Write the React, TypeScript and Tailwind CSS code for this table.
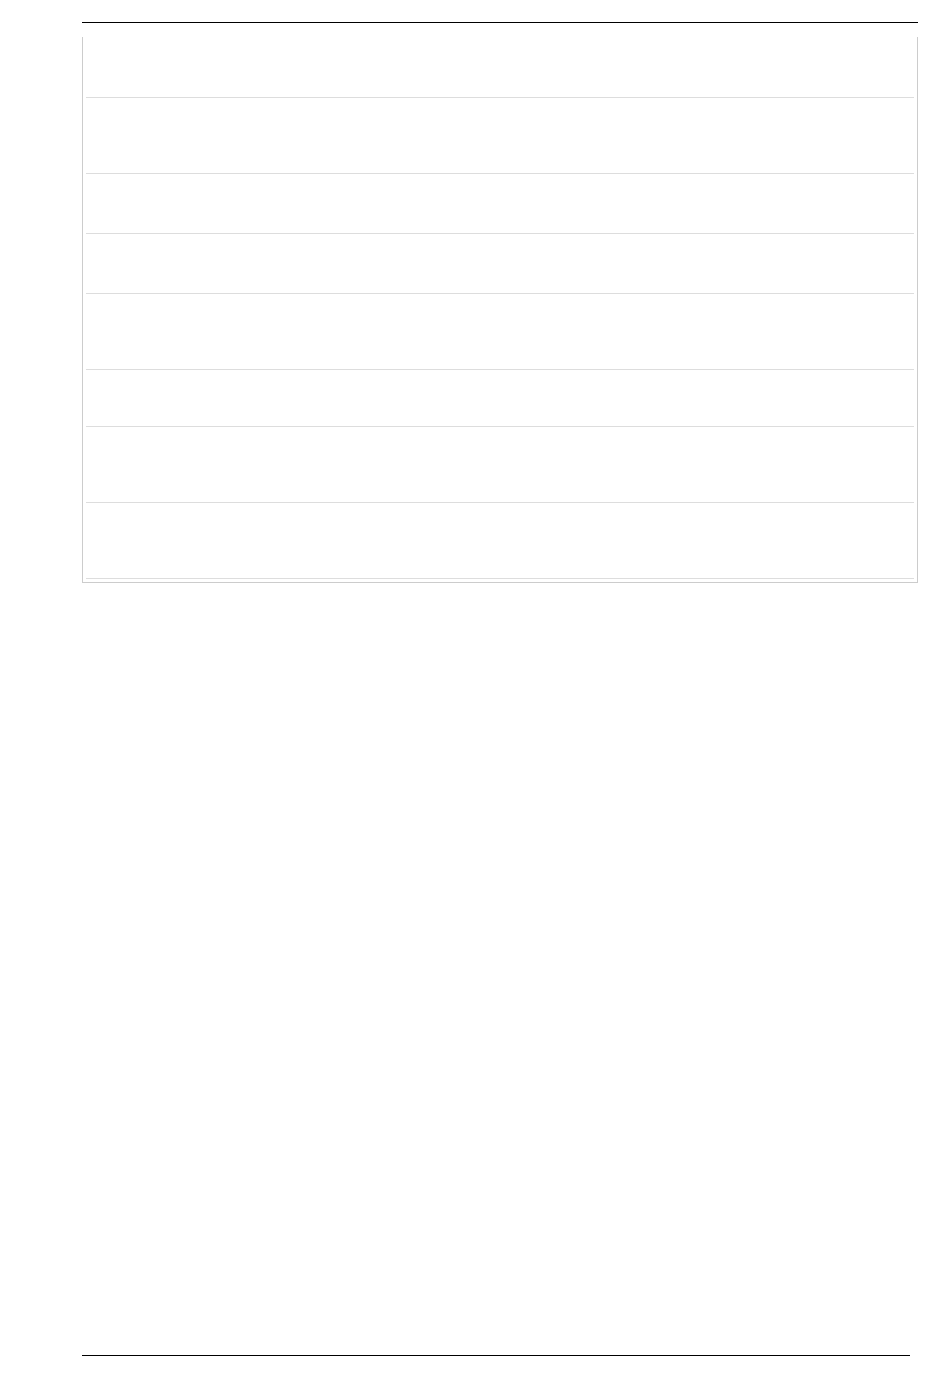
import React from "react";

const rows = [61, 76, 60, 60, 76, 57, 76, 76];

export default function App() {
  return (
    <div className="w-[950px] h-[1378px] bg-white flex flex-col" style={{ fontFamily: '"Liberation Sans", Arial, sans-serif' }}>
      <div className="mt-[22px] ml-[82px] w-[836px] h-px bg-black" />
      <div className="mt-[14px] ml-[82px] w-[836px] border-x border-b border-[#cccccc] px-[3px] pb-[3px]">
        {rows.map((h, i) => (
          <div
            key={i}
            className={
              [
                "h-[61px]",
                "h-[76px]",
                "h-[60px]",
                "h-[60px]",
                "h-[76px]",
                "h-[57px]",
                "h-[76px]",
                "h-[76px]",
              ][i] + " border-b border-[#dddddd] box-border"
            }
          />
        ))}
      </div>
      <div className="mt-auto mb-[22px] ml-[82px] w-[828px] h-px bg-black" />
    </div>
  );
}
